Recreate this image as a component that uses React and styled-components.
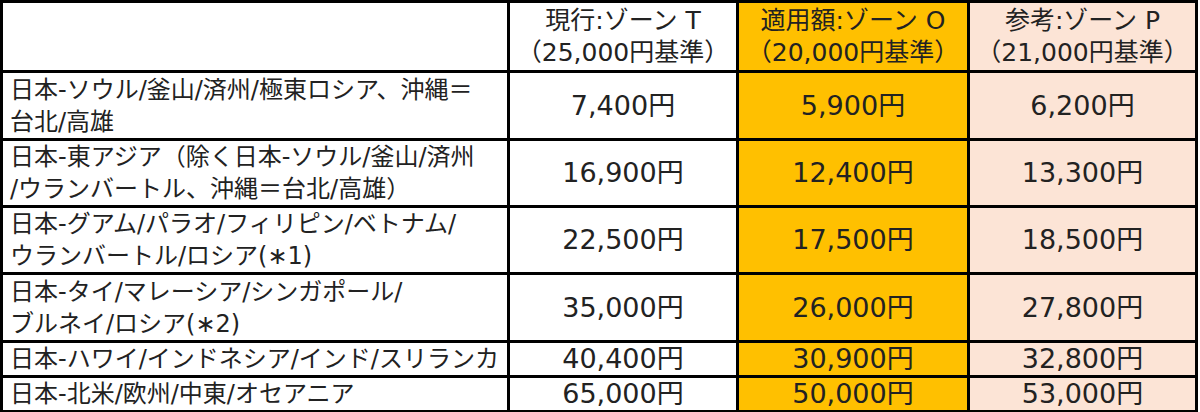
import React from "react";
import styled, { createGlobalStyle } from "styled-components";

const GlobalStyle = createGlobalStyle`
    body {
        margin: 0;
        background: #fff;
    }
`

const zoneColors = {
    T: "#ffffff",
    O: "#ffc000",
    P: "#fce4d6",
};

const Table = styled.table`
    border-collapse: collapse;
    table-layout: fixed;
    width: 1198px;
    border: 3px solid #000;
    font-family: "DejaVu Sans", "Noto Sans CJK JP", sans-serif;
    color: #222;
    td, th {
        border: 3px solid #000;
        padding: 0;
        vertical-align: middle;
    }
`

const Col = styled.col`
    width: ${(p) => p.$w}px;
`

const Row = styled.tr`
    height: ${(p) => p.$h}px;
`

const HeadCell = styled.th`
    background: ${(p) => zoneColors[p.$zone] || "#fff"};
    font-weight: normal;
    font-size: 25px;
    line-height: 32px;
    text-align: center;
    white-space: nowrap;
`

const LabelCell = styled.td`
    font-size: 24px;
    line-height: 32px;
    text-align: left;
    white-space: nowrap;
    && {
        padding-left: 7px;
    }
`

const PriceCell = styled.td`
    background: ${(p) => zoneColors[p.$zone]};
    font-size: 27px;
    line-height: 30px;
    text-align: center;
    white-space: nowrap;
`

const columns = [507, 229, 231, 228];

const zones = [
    { key: "T", title: "現行:ゾーン T", base: "（25,000円基準）" },
    { key: "O", title: "適用額:ゾーン O", base: "（20,000円基準）" },
    { key: "P", title: "参考:ゾーン P", base: "（21,000円基準）" },
];

const rows = [
    { h: 68, label: ["日本-ソウル/釜山/済州/極東ロシア、沖縄＝", "台北/高雄"], prices: ["7,400円", "5,900円", "6,200円"] },
    { h: 66, label: ["日本-東アジア（除く日本-ソウル/釜山/済州", "/ウランバートル、沖縄＝台北/高雄）"], prices: ["16,900円", "12,400円", "13,300円"] },
    { h: 66, label: ["日本-グアム/パラオ/フィリピン/ベトナム/", "ウランバートル/ロシア(∗1)"], prices: ["22,500円", "17,500円", "18,500円"] },
    { h: 68, label: ["日本-タイ/マレーシア/シンガポール/", "ブルネイ/ロシア(∗2)"], prices: ["35,000円", "26,000円", "27,800円"] },
    { h: 34, label: ["日本-ハワイ/インドネシア/インド/スリランカ"], prices: ["40,400円", "30,900円", "32,800円"] },
    { h: 31, label: ["日本-北米/欧州/中東/オセアニア"], prices: ["65,000円", "50,000円", "53,000円"] },
];

const App = () => {
    return (
        <>
            <GlobalStyle />
            <Table>
                <colgroup>
                    {columns.map((w, i) => <Col key={i} $w={w} />)}
                </colgroup>
                <thead>
                    <Row $h={70}>
                        <HeadCell />
                        {zones.map((z) => (
                            <HeadCell key={z.key} $zone={z.key}>
                                {z.title}
                                <br />
                                {z.base}
                            </HeadCell>
                        ))}
                    </Row>
                </thead>
                <tbody>
                    {rows.map((r, i) => (
                        <Row key={i} $h={r.h}>
                            <LabelCell>
                                {r.label.map((line, j) => (
                                    <React.Fragment key={j}>
                                        {j > 0 && <br />}
                                        {line}
                                    </React.Fragment>
                                ))}
                            </LabelCell>
                            {r.prices.map((p, j) => (
                                <PriceCell key={j} $zone={zones[j].key}>{p}</PriceCell>
                            ))}
                        </Row>
                    ))}
                </tbody>
            </Table>
        </>
    )
}

export default App;
